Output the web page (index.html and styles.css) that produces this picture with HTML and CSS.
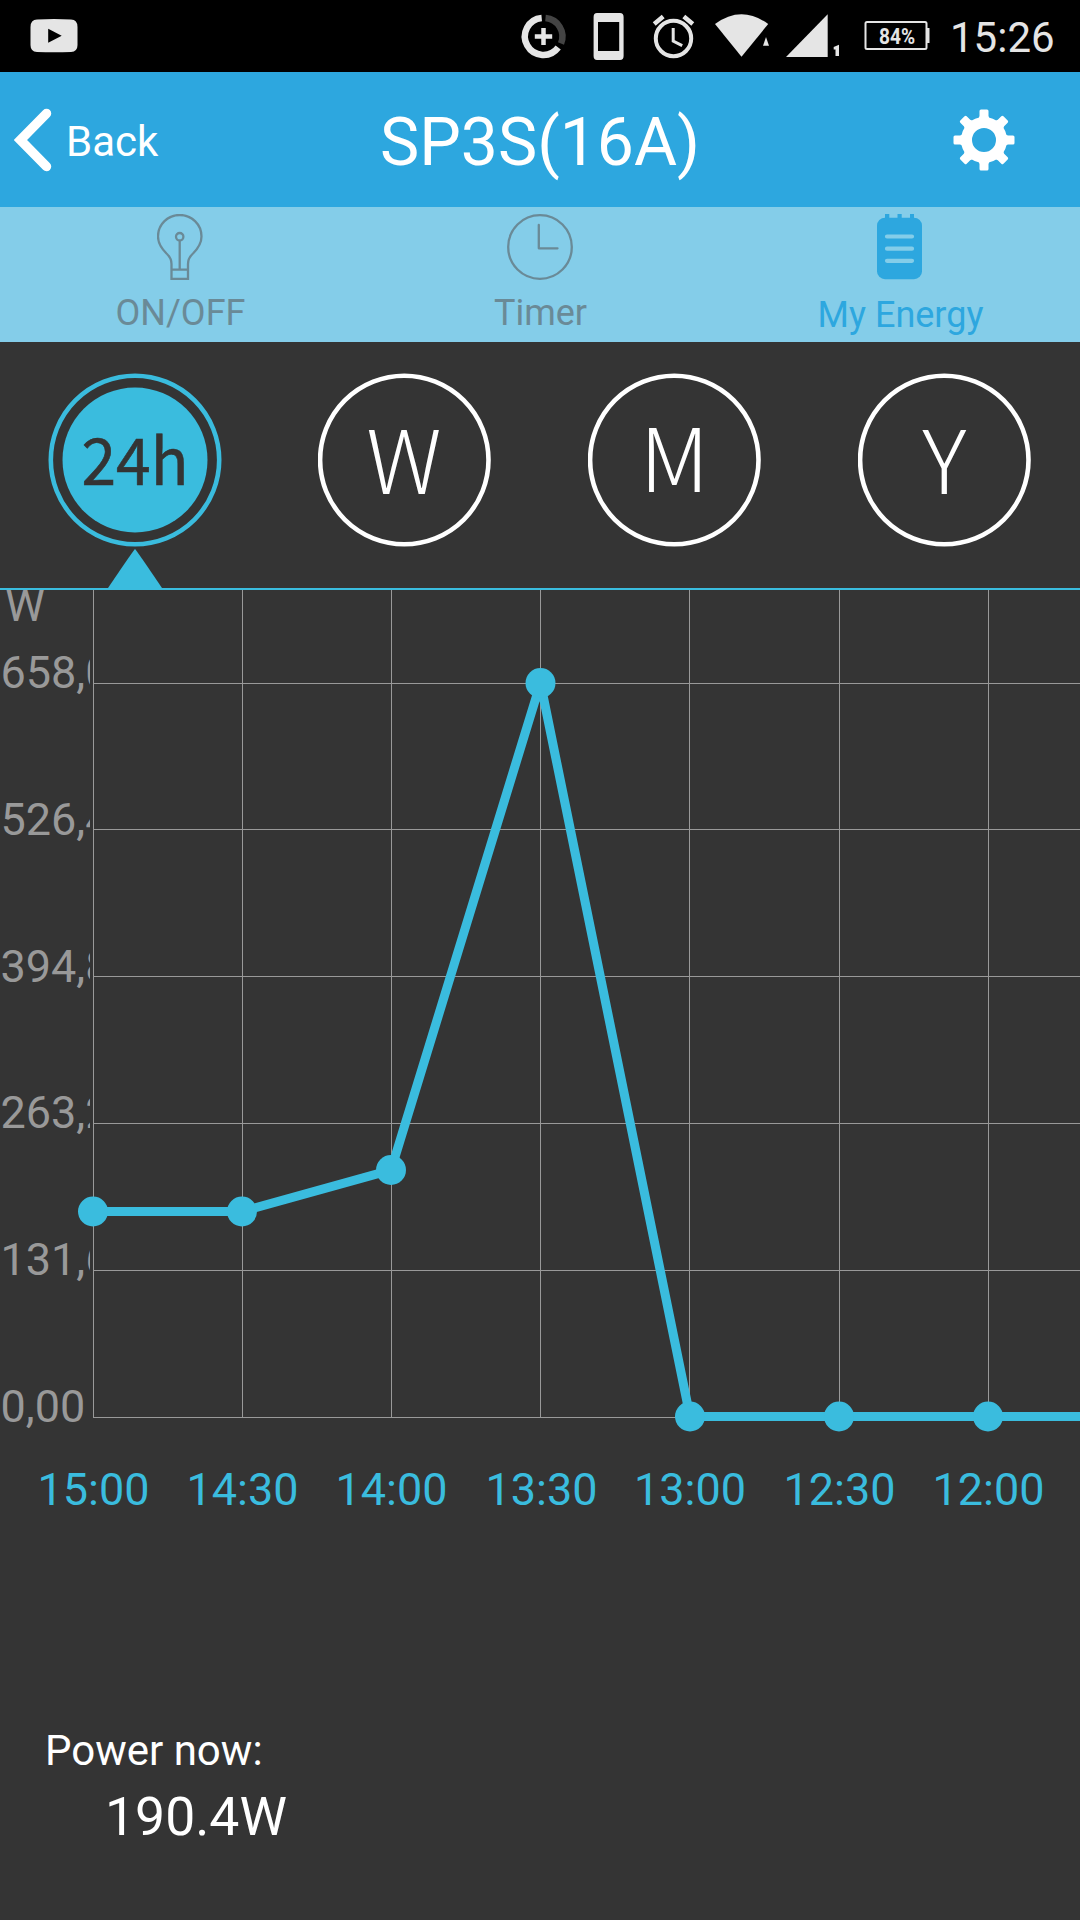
FILE: index.html
```
<!DOCTYPE html>
<html lang="en">
<head>
<meta charset="UTF-8" />
<meta name="viewport" content="width=device-width, initial-scale=1.0" />
<title>SP3S(16A)</title>
<link rel="stylesheet" href="styles.css">
</head>
<body>

<!-- Status bar -->
<div class="statusbar">
  <svg class="status-left" width="48" height="72" viewBox="30 0 48 72">
    <path d="M37 19.6Q54 18.6 71 19.6Q77.500 20 77.500 27V45Q77.500 51.600 71 52Q54 52.600 37 52Q30.500 51.600 30.500 45V27Q30.500 20 37 19.600Z" fill="#e5e5e5"/>
    <path d="M48.200 28.700L61.700 35.700L48.200 42.700Z" fill="#000"/>
  </svg>
  <svg class="status-right" width="420" height="72" viewBox="515 0 420 72">
    <!-- data usage -->
    <g fill="none" stroke-width="6.500">
      <path d="M545.500 18A18.500 18.500 0 0 1 561 43.500" stroke="#444"/>
      <path d="M541.700 18A18.500 18.500 0 1 0 558.200 47.500" stroke="#e5e5e5"/>
      <path d="M534.800 36.500H552.200M543.500 28V45" stroke="#e5e5e5" stroke-width="4.500"/>
    </g>
    <g fill="#e5e5e5">
      <!-- phone -->
      <path fill-rule="evenodd" d="M597 13H620Q623.600 13 623.600 17V56Q623.600 60 620 60H597Q593.600 60 593.600 56V17Q593.600 13 597 13ZM598 22V51H619.200V22Z"/>
      <!-- wifi -->
      <path d="M715 24Q741.500 4.500 768.200 24L741.500 56.700Z"/>
      <path d="M766 37L769 45.700H763Z"/>
      <!-- signal -->
      <path d="M827.700 14.300V57H786Z"/>
      <path d="M839 44.700V56H835.500V49.500H833.700V47Z"/>
    </g>
    <!-- alarm -->
    <g fill="none" stroke="#e5e5e5" stroke-width="4">
      <circle cx="673.500" cy="38.500" r="17.700"/>
      <path d="M673.200 28V41L682.200 45.700" stroke-width="3"/>
      <path d="M654.200 24L663.200 16.500M692.800 24L683.800 16.500" stroke-width="4.500"/>
    </g>
    <!-- battery -->
    <rect x="865.500" y="22" width="61" height="27" rx="1.500" fill="none" stroke="#e5e5e5" stroke-width="2"/>
    <path d="M927 28H929.500V43H927Z" fill="#e5e5e5"/>
    <text class="battery" x="879" y="44" textLength="36" lengthAdjust="spacingAndGlyphs">84%</text>
  </svg>
  <span class="clock">15:26</span>
</div>

<!-- Header -->
<div class="header">
  <div class="back">
    <svg width="38" height="64" viewBox="14 107 38 64">
      <path d="M46.500 112.500L20.500 139L46.500 165.500" fill="none" stroke="#fff" stroke-width="9.500" stroke-linecap="round"/>
    </svg>
    <span>Back</span>
  </div>
  <h1>SP3S(16A)</h1>
  <div class="settings">
    <svg width="62" height="62" viewBox="-31 -31 62 62">
      <g fill="#fff">
        <path id="tooth" d="M-6.500 -19L-4.500 -24V-29Q-4.500 -30.500 -3 -30.500H3Q4.500 -30.500 4.500 -29V-24L6.500 -19Z"/>
        <use href="#tooth" transform="rotate(45)"/>
        <use href="#tooth" transform="rotate(90)"/>
        <use href="#tooth" transform="rotate(135)"/>
        <use href="#tooth" transform="rotate(180)"/>
        <use href="#tooth" transform="rotate(225)"/>
        <use href="#tooth" transform="rotate(270)"/>
        <use href="#tooth" transform="rotate(315)"/>
      </g>
      <circle r="17.500" fill="none" stroke="#fff" stroke-width="11"/>
    </svg>
  </div>
</div>

<!-- Tabs -->
<div class="tabs">
  <div class="tab">
    <svg width="46" height="66" viewBox="157 214 46 66" fill="none" stroke="#6a8a97" stroke-width="2.300">
      <path d="M171.500 279V264Q171.500 258 166.500 253.500C161 248 158 243 158 236.500C158 224 168 215 179.700 215C191.500 215 201.500 224 201.500 236.500C201.500 243 198.500 248 193 253.500Q188 258 188 264V279Z"/>
      <circle cx="179.700" cy="236.700" r="3.700"/>
      <path d="M179.700 240.500V269.500M171 269.700H188.500"/>
    </svg>
    <span>ON/OFF</span>
  </div>
  <div class="tab">
    <svg width="66" height="66" viewBox="507 214 66 66" fill="none" stroke="#6a8a97" stroke-width="2.300">
      <circle cx="540" cy="247" r="31.800"/>
      <path d="M538.800 225V248.300H557.500" stroke-linecap="round" stroke-linejoin="round"/>
    </svg>
    <span>Timer</span>
  </div>
  <div class="tab active">
    <svg width="46" height="66" viewBox="877 214 46 66">
      <path d="M885 214H889.300V220H885ZM897.500 214H901.700V220H897.500ZM910 214H914V220H910Z" fill="#2da7df"/>
      <rect x="877" y="217.700" width="45" height="61.500" rx="8" fill="#2da7df"/>
      <path d="M887 236.500H912M887 248.700H912M887 260.800H912" stroke="#84cde9" stroke-width="4.200" stroke-linecap="round"/>
    </svg>
    <span>My Energy</span>
  </div>
</div>

<!-- Period selector -->
<div class="periods">
  <div class="period selected">
    <svg width="174" height="174" viewBox="0 0 174 174">
      <circle class="ring" cx="87" cy="87" r="84.200"/>
      <circle class="disc" cx="87" cy="87" r="72.500"/>
      <text x="87" y="112" textLength="107" lengthAdjust="spacingAndGlyphs">24h</text>
    </svg>
    <svg class="arrow" width="54" height="39" viewBox="0 0 54 39">
      <path d="M27 0Q29 2 54 39H0Q25 2 27 0Z"/>
    </svg>
  </div>
  <div class="period">
    <svg width="174" height="174" viewBox="0 0 174 174">
      <circle class="ring" cx="86.300" cy="87" r="84.200"/>
      <text x="86" y="120.500">W</text>
    </svg>
  </div>
  <div class="period">
    <svg width="174" height="174" viewBox="0 0 174 174">
      <circle class="ring" cx="86.300" cy="87" r="84.200"/>
      <text x="86.300" y="119">M</text>
    </svg>
  </div>
  <div class="period">
    <svg width="174" height="174" viewBox="0 0 174 174">
      <circle class="ring" cx="86.300" cy="87" r="84.200"/>
      <text x="86.300" y="120.500">Y</text>
    </svg>
  </div>
</div>

<!-- Chart -->
<svg class="chart" width="1080" height="950" viewBox="0 590 1080 950">
  <clipPath id="axisClip"><rect x="0" y="590" width="90" height="860"/></clipPath>
  <g class="grid">
    <path d="M93.500 590V1418M242.500 590V1418M391.500 590V1418M540.500 590V1418M689.500 590V1418M839.500 590V1418M988.500 590V1418"/>
    <path d="M93 683.500H1080M93 829.500H1080M93 976.500H1080M93 1123.500H1080M93 1270.500H1080M93 1417.500H1080"/>
  </g>
  <g class="y-labels" clip-path="url(#axisClip)">
    <text x="5" y="621">W</text>
    <text x="0.500" y="687.500">658,0</text>
    <text x="0.500" y="834.500">526,4</text>
    <text x="0.500" y="981.500">394,8</text>
    <text x="0.500" y="1128">263,2</text>
    <text x="0.500" y="1275">131,6</text>
    <text x="0.500" y="1421.500">0,00</text>
  </g>
  <polyline class="line" points="93,1211.500 242,1211.500 391,1170 540.500,683 690,1416.500 839,1416.500 988,1416.500 1090,1416.500"/>
  <g class="points">
    <circle cx="93" cy="1211.500" r="15"/>
    <circle cx="242" cy="1211.500" r="15"/>
    <circle cx="391" cy="1170" r="15"/>
    <circle cx="540.500" cy="683" r="15"/>
    <circle cx="690" cy="1416.500" r="15"/>
    <circle cx="839" cy="1416.500" r="15"/>
    <circle cx="988" cy="1416.500" r="15"/>
  </g>
  <g class="x-labels">
    <text x="93.500" y="1504.500">15:00</text>
    <text x="242.500" y="1504.500">14:30</text>
    <text x="391.500" y="1504.500">14:00</text>
    <text x="541.500" y="1504.500">13:30</text>
    <text x="690" y="1504.500">13:00</text>
    <text x="839.500" y="1504.500">12:30</text>
    <text x="988.500" y="1504.500">12:00</text>
  </g>
</svg>

<!-- Current power -->
<div class="power">
  <div class="power-label">Power now:</div>
  <div class="power-value">190.4W</div>
</div>

</body>
</html>
```
FILE: styles.css
```
* {
  box-sizing: border-box;
}

body {
  margin: 0;
  height: 1920px;
  overflow: hidden;
  background-color: #343434;
  color: #fff;
  font-family: Roboto, sans-serif;
}

svg {
  display: block;
}

.statusbar {
  display: flex;
  align-items: center;
  height: 72px;
  padding: 0 24px 0 30px;
  background-color: #000;
}

.status-right {
  margin-left: auto;
  margin-right: 15px;
}

.battery {
  font-size: 22px;
  font-weight: bold;
  fill: #e5e5e5;
}

.clock {
  width: 106px;
  padding-top: 2px;
  font-size: 42px;
  color: #e5e5e5;
}

.header {
  display: grid;
  grid-template-columns: 1fr auto 1fr;
  align-items: center;
  height: 135px;
  background-color: #2da7df;
}

.back {
  display: flex;
  align-items: center;
  gap: 14px;
  padding-left: 14px;
  font-size: 42px;
}

.back span {
  padding-top: 3px;
}

h1 {
  margin: 0;
  padding-top: 6px;
  font-size: 66px;
  font-weight: normal;
}

.settings {
  display: flex;
  justify-content: flex-end;
  padding-right: 65px;
}

.tabs {
  display: grid;
  grid-template-columns: repeat(3, 1fr);
  height: 135px;
  padding-top: 7px;
  background-color: #84cde9;
}

.tab {
  display: flex;
  flex-direction: column;
  align-items: center;
  gap: 12px;
  font-size: 36px;
  color: #6a8a97;
}

.tab span {
  padding-left: 1px;
}

.tab.active {
  gap: 14px;
  color: #2da7df;
}

.periods {
  display: grid;
  grid-template-columns: repeat(4, 1fr);
  height: 248px;
  padding-top: 31px;
  border-bottom: 2px solid #3abcde;
}

.period {
  display: flex;
  flex-direction: column;
  align-items: center;
  gap: 2px;
}

.ring {
  fill: none;
  stroke: #fff;
  stroke-width: 4.6px;
}

.period text {
  font-family: "Noto Sans CJK SC", sans-serif;
  font-size: 88px;
  font-weight: 300;
  text-anchor: middle;
  fill: #fff;
}

.selected .ring {
  stroke: #3abcde;
}

.disc,
.arrow {
  fill: #3abcde;
}

.period.selected text {
  font-size: 64px;
  font-weight: 400;
  fill: #343434;
  stroke: #343434;
  stroke-width: 0.6px;
}

.grid {
  stroke: #999;
  stroke-width: 1px;
}

.y-labels {
  font-size: 45px;
  fill: #999;
}

.x-labels {
  font-size: 45px;
  text-anchor: middle;
  fill: #3abcde;
}

.line {
  fill: none;
  stroke: #3abcde;
  stroke-width: 9px;
}

.points {
  fill: #3abcde;
}

.power {
  padding: 186px 0 0 45px;
}

.power-label {
  font-size: 42px;
  line-height: 50px;
}

.power-value {
  padding-left: 60px;
  margin-top: 9px;
  font-size: 53.5px;
  line-height: 64px;
}
```
